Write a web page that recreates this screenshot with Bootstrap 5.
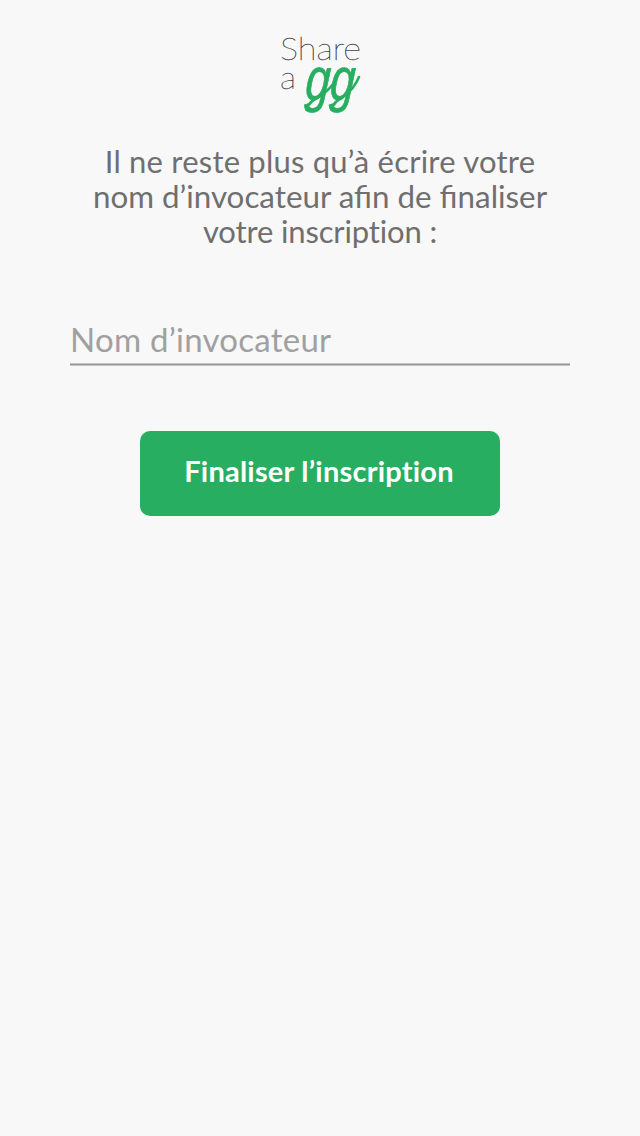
<!DOCTYPE html>
<html lang="fr">
<head>
<meta charset="utf-8">
<meta name="viewport" content="width=device-width, initial-scale=1">
<title>Share a gg</title>
<link href="https://cdn.jsdelivr.net/npm/bootstrap@5.3.0/dist/css/bootstrap.min.css" rel="stylesheet">
<style>
body { background: #f8f8f8; font-family: Lato, "Open Sans", sans-serif; min-height: 1136px; }
.brand-mark { width: 100px; height: 100px; margin-top: 26px; }
.brand-mark text { font-family: Lato, sans-serif; }
.brand-mark .script { font-family: "Liberation Sans", sans-serif; }
.intro { margin-top: 18px; font-size: 31px; line-height: 35px; color: #6f6f6f; }
.intro span { display: block; white-space: nowrap; }
.intro .line-a { letter-spacing: .21px; }
.intro .line-b { font-size: 31.35px; }
.intro .line-c { letter-spacing: -.15px; }
.signup { width: 500px; margin-top: 66px; }
.field { padding-bottom: 3px; background: linear-gradient(#c4c4c4 1px, #989898 1px 2px, #c4c4c4 2px) bottom / 100% 3px no-repeat; }
.summoner.form-control { height: 48px; font-size: 33px; line-height: 48px; letter-spacing: .25px; color: #6f6f6f; }
.summoner::placeholder { color: #a0a0a0; opacity: 1; }
.btn-finish { width: 360px; height: 85px; margin-top: 65px; padding: 0 2px 6px 0; background: #28ae60; border: 0; border-radius: 10px; font-size: 29px; font-weight: 700; letter-spacing: .22px; color: #fff; }
</style>
</head>
<body>
<main class="d-flex flex-column align-items-center">
  <svg class="brand-mark" viewBox="0 0 100 100" role="img" aria-label="Share a gg">
    <g fill="#444" stroke="#444" stroke-width=".35" font-weight="100" font-size="31.5">
      <text x="10" y="33.5" textLength="81" lengthAdjust="spacingAndGlyphs">Share</text>
      <text x="10" y="63" textLength="16" lengthAdjust="spacingAndGlyphs">a</text>
    </g>
    <text class="script" transform="translate(34.5 74) skewX(-4) scale(.74 1)" fill="#28ae60" stroke="#28ae60" stroke-width=".8" font-size="60" font-style="italic">gg</text>
    <path d="M36.5 84Q38 76 50 70Q58 65 63 58M61.500 84Q63 76 74 70Q84 63 89 51" fill="none" stroke="#28ae60" stroke-width="2.6" stroke-linecap="round"/>
  </svg>
  <p class="intro text-center mb-0"><span class="line-a">Il ne reste plus qu’à écrire votre</span><span class="line-b">nom d’invocateur afin de finaliser</span><span class="line-c">votre inscription :</span></p>
  <form class="signup d-flex flex-column align-items-center">
    <div class="field w-100">
      <input class="summoner form-control bg-transparent border-0 rounded-0 shadow-none p-0" type="text" placeholder="Nom d’invocateur" aria-label="Nom d’invocateur">
    </div>
    <button class="btn btn-finish" type="button">Finaliser l’inscription</button>
  </form>
</main>
<script src="https://cdn.jsdelivr.net/npm/bootstrap@5.3.0/dist/js/bootstrap.bundle.min.js"></script>
</body>
</html>
